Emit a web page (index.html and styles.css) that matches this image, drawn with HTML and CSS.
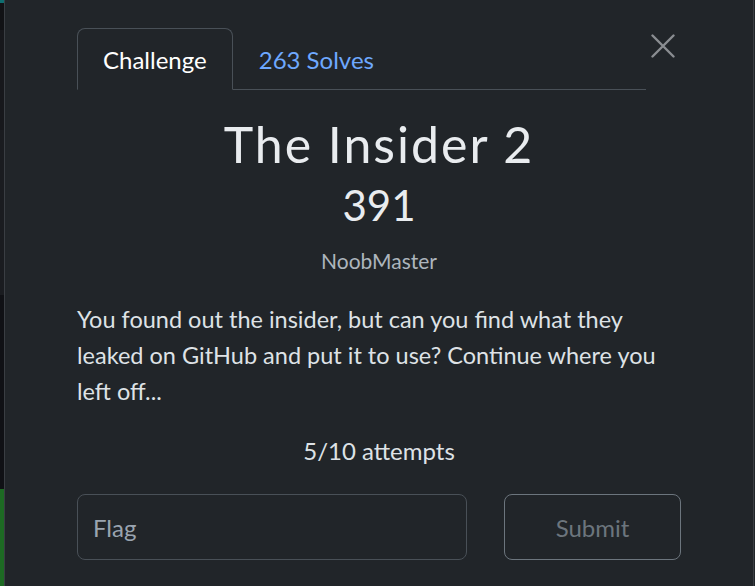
FILE: index.html
```html
<!DOCTYPE html>
<html>
<head>
<meta charset="utf-8">
<link rel="stylesheet" href="styles.css">
</head>
<body>
<div class="page">
  <div class="backdrop">
    <div class="bd bd-teal"></div>
    <div class="bd bd-a"></div>
    <div class="bd bd-b"></div>
    <div class="bd bd-c"></div>
    <div class="bd bd-d"></div>
    <div class="bd bd-green"></div>
  </div>
  <div class="modal">
    <div class="header">
      <ul class="tabs">
        <li class="tab active">Challenge</li>
        <li class="tab link">263 Solves</li>
      </ul>
      <button class="close" aria-label="Close">
        <svg width="24" height="24" viewBox="0 0 24 24"><path d="M1.5 1.5 L22.5 22.5 M22.5 1.5 L1.5 22.5" stroke="#8a8d91" stroke-width="2.4" stroke-linecap="round"/></svg>
      </button>
    </div>
    <h2 class="title">The Insider 2</h2>
    <h3 class="value">391</h3>
    <div class="author">NoobMaster</div>
    <p class="desc">You found out the insider, but can you find what they leaked on GitHub and put it to use? Continue where you left off...</p>
    <p class="attempts">5/10 attempts</p>
    <div class="form">
      <input class="flag" type="text" placeholder="Flag">
      <button class="submit">Submit</button>
    </div>
  </div>
</div>
</body>
</html>
```

FILE: styles.css
```css
html, body {
  margin: 0;
  padding: 0;
  height: 100%;
  background: #212529;
  overflow: hidden;
}
.page {
  display: flex;
  height: 586px;
  font-family: Lato, "Open Sans", sans-serif;
}
.backdrop {
  width: 4px;
  display: flex;
  flex-direction: column;
  flex-shrink: 0;
}
.bd { width: 4px; }
.bd-teal { height: 3px; background: #0f6e70; }
.bd-a { height: 27px; background: #111215; }
.bd-b { height: 100px; background: #17181c; }
.bd-c { height: 165px; background: #1a1c20; }
.bd-d { height: 194px; background: #101115; }
.bd-green { flex: 1; background: #1d6a23; }
.modal {
  flex: 1;
  background: #212529;
  border-left: 1px solid #3a3e43;
  border-right: 1px solid #3a3e43;
  margin-right: 2px;
  padding: 28px 72px 0 72px;
  box-sizing: border-box;
  color: #dee2e6;
}
.header {
  display: flex;
  align-items: flex-start;
}
.tabs {
  display: flex;
  list-style: none;
  margin: 0;
  padding: 0;
  flex: 1;
  border-bottom: 1px solid #495057;
}
.tab {
  font-size: 24px;
  height: 60px;
  line-height: 62px;
  padding: 0 25px;
  box-sizing: border-box;
  margin-bottom: -1px;
  border: 1px solid transparent;
  border-top-left-radius: 8px;
  border-top-right-radius: 8px;
}
.tab.active {
  color: #ffffff;
  border-color: #495057;
  border-bottom-color: #212529;
  height: 62px;
  background: #212529;
}
.tab.link {
  color: #6ea8fe;
}
.close {
  background: none;
  border: 0;
  padding: 0;
  width: 29px;
  height: 30px;
  margin: 6px 6px 0 0;
  display: flex;
  justify-content: flex-end;
  cursor: pointer;
}
.title {
  margin: 25px 0 0;
  text-align: center;
  font-weight: 400;
  font-size: 50px;
  line-height: 58px;
  letter-spacing: 2px;
  color: #e9ecef;
}
.value {
  margin: 7px 0 0;
  text-align: center;
  font-weight: 400;
  font-size: 42px;
  line-height: 50px;
  color: #e9ecef;
}
.author {
  margin-top: 17px;
  text-align: center;
  font-size: 21px;
  line-height: 28px;
  color: #adb5bd;
}
.desc {
  margin: 26px 0 0;
  font-size: 23.5px;
  line-height: 36px;
  color: #dee2e6;
}
.attempts {
  margin: 24px 0 0;
  text-align: center;
  font-size: 24px;
  line-height: 36px;
  color: #dee2e6;
}
.form {
  margin-top: 25px;
  display: flex;
  gap: 37px;
}
.flag {
  width: 390px;
  height: 66px;
  box-sizing: border-box;
  background: #212529;
  border: 1px solid #495057;
  border-radius: 8px;
  padding: 0 15px;
  font-family: Lato, sans-serif;
  font-size: 24px;
  color: #dee2e6;
}
.flag::placeholder { color: #9aa4b0; }
.submit {
  width: 177px;
  height: 66px;
  background: transparent;
  border: 1px solid #6c757d;
  border-radius: 8px;
  font-family: Lato, sans-serif;
  font-size: 24px;
  color: #6c757d;
}
```
